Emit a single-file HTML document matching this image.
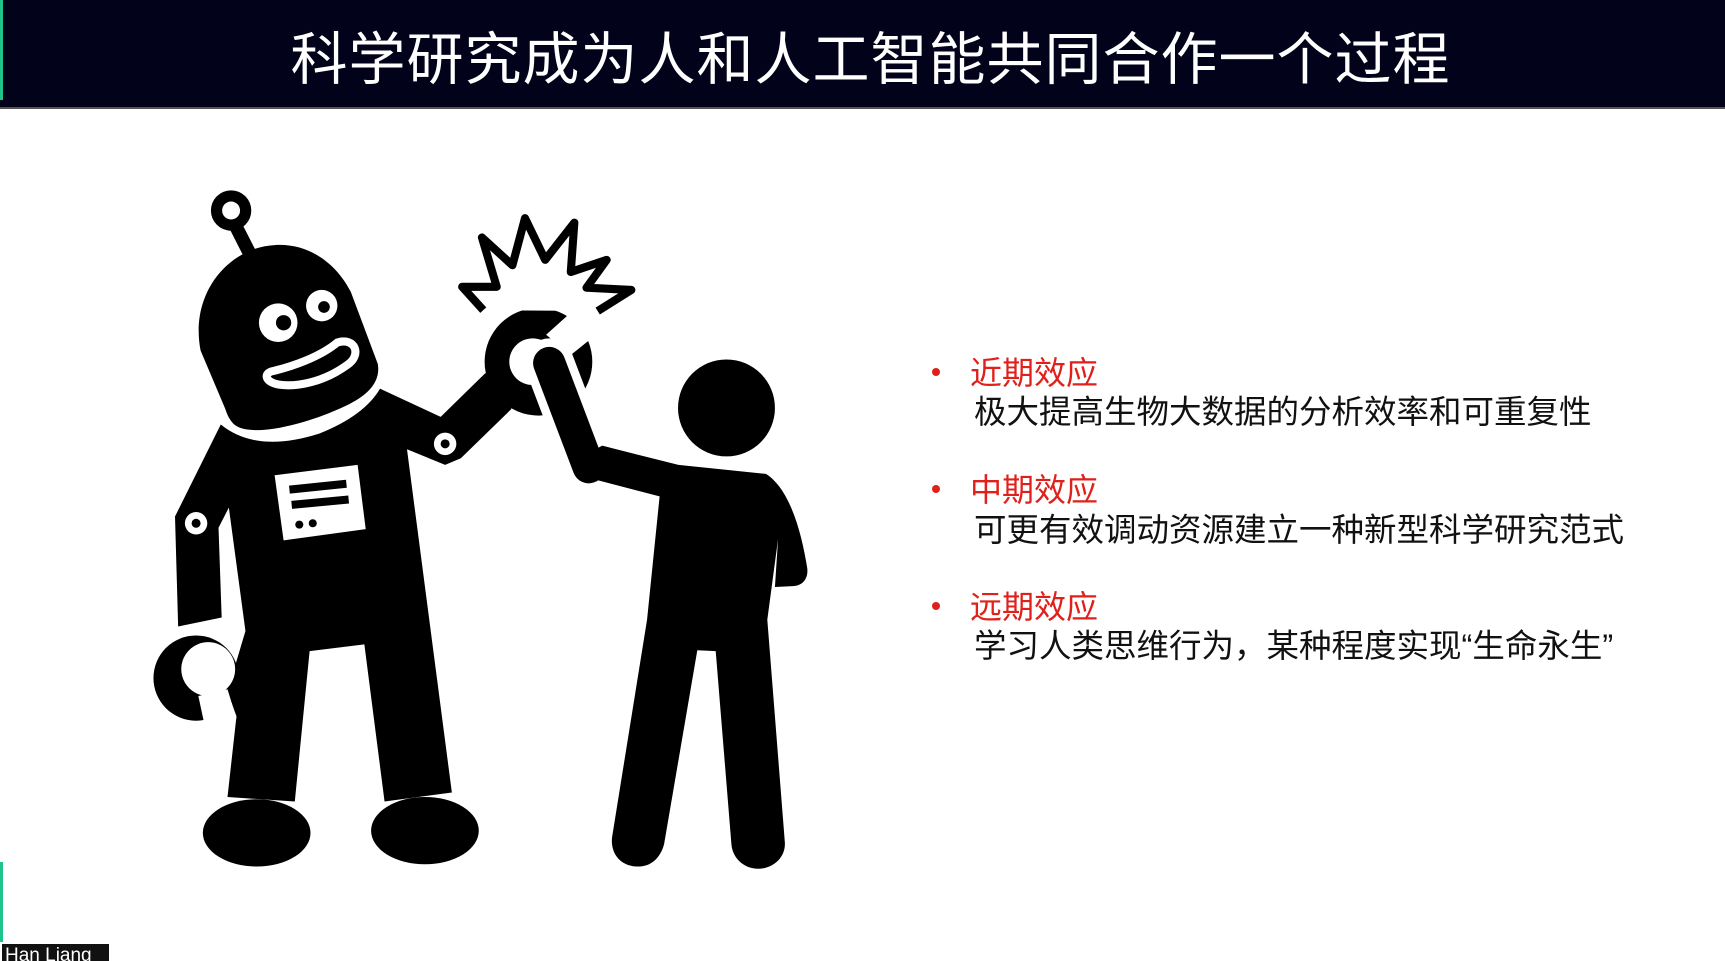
<!DOCTYPE html>
<html><head><meta charset="utf-8"><style>
html,body{margin:0;padding:0;width:1725px;height:961px;overflow:hidden;background:#fff;font-family:"Liberation Sans","Noto Sans CJK SC",sans-serif;}
#hdr{position:absolute;left:0;top:0;width:1725px;height:107px;background:#02021a;border-bottom:2px solid #555;}
#hdr .g{position:absolute;left:0;top:0;width:3px;height:100px;background:#1fc48a;}
#title{position:absolute;left:8px;width:1725px;top:28px;text-align:center;color:#fff;font-size:57px;line-height:64px;letter-spacing:1px;}
.b{position:absolute;color:#e0201a;font-size:32px;line-height:40px;}
.t{position:absolute;color:#111;font-size:32.5px;line-height:40px;}
.dot{position:absolute;width:8px;height:8px;border-radius:50%;background:#e0201a;}
#gl{position:absolute;left:0;top:862px;width:3px;height:80px;background:#1fc48a;}
#name{position:absolute;left:2px;top:944px;width:104px;height:17px;background:#111;color:#fff;font-size:19px;line-height:24px;padding-left:3px;overflow:hidden;}
</style></head><body>
<div id="hdr"><div class="g"></div><div id="title">科学研究成为人和人工智能共同合作一个过程</div></div>

<svg style="position:absolute;left:140px;top:180px" width="700" height="700" viewBox="0 0 1560 1560">
<g fill="#000">
<circle cx="203" cy="68" r="45"/><circle cx="203" cy="68" r="20" fill="#fff"/>
<line x1="212" y1="100" x2="245" y2="165" stroke="#000" stroke-width="30"/>
<path d="M135,380 C110,250 200,150 300,145 C380,140 440,190 470,250 L530,410 C540,470 470,500 420,520 C330,555 240,570 210,545 C200,535 195,525 190,510 Z"/>
<circle cx="308" cy="318" r="43" fill="#fff"/><circle cx="320" cy="318" r="17"/>
<circle cx="405" cy="280" r="35" fill="#fff"/><circle cx="410" cy="283" r="13"/>
<path d="M300,425 C340,415 400,395 440,362 C480,350 495,390 462,412 C410,450 350,462 310,456 C275,450 275,428 300,425 Z" stroke="#fff" stroke-width="18"/>
<path d="M180,545 Q260,610 400,565 Q500,525 535,465 L670,528 L700,620 L595,600 L695,1365 L545,1385 L500,1035 L378,1050 L345,1385 L195,1375 L215,1195 L195,1140 L235,1005 L198,730 L175,775 L182,975 L85,995 L78,750 Z"/>
<polygon points="670,528 770,430 828,510 715,620 680,635 595,600"/>
<circle cx="680" cy="588" r="25" fill="#fff"/><circle cx="680" cy="588" r="10"/>
<circle cx="125" cy="765" r="25" fill="#fff"/><circle cx="125" cy="765" r="10"/>
<circle cx="125" cy="1110" r="95"/><circle cx="152" cy="1090" r="60" fill="#fff"/>
<polygon points="130,1150 195,1135 215,1200 145,1220" fill="#fff"/>
<ellipse cx="260" cy="1455" rx="120" ry="75"/><ellipse cx="635" cy="1450" rx="120" ry="75"/>
<polygon points="300,658 485,635 503,778 320,803" fill="#fff"/>
<line x1="333" y1="690" x2="460" y2="677" stroke="#000" stroke-width="18"/>
<line x1="338" y1="724" x2="465" y2="712" stroke="#000" stroke-width="18"/>
<circle cx="355" cy="768" r="9"/><circle cx="385" cy="765" r="9"/>
<circle cx="888" cy="405" r="120"/><circle cx="875" cy="405" r="52" fill="#fff"/>
<polygon points="905,345 955,300 1010,350 960,390" fill="#fff"/>
<polyline points="765,290 718,238 795,238 762,128 830,190 858,85 903,178 968,95 960,205 1040,178 995,240 1095,245 1020,292" fill="#fff" stroke="#000" stroke-width="18" stroke-linejoin="round"/>
<circle cx="1307" cy="508" r="108"/>
<polyline points="912,408 1000,640" stroke="#fff" stroke-width="110" stroke-linecap="round" fill="none"/>
<polyline points="912,408 1000,640" stroke="#000" stroke-width="72" stroke-linecap="round" fill="none"/>
<path d="M1030,592 L1200,635 L1395,655 C1450,690 1475,790 1487,865 C1490,890 1475,905 1455,905 L1415,907 L1422,800 L1398,980 L1437,1475 C1440,1510 1410,1535 1378,1535 C1345,1535 1320,1510 1318,1480 L1283,1050 L1242,1048 L1168,1480 C1160,1510 1140,1530 1110,1530 C1070,1530 1048,1500 1052,1465 L1130,980 L1158,705 L985,660 C970,655 965,640 962,630 Z"/>
</g>
</svg>

<div class="dot" style="left:932px;top:368px"></div>
<div class="b" style="left:970px;top:353px">近期效应</div>
<div class="t" style="left:974px;top:392px">极大提高生物大数据的分析效率和可重复性</div>
<div class="dot" style="left:932px;top:485px"></div>
<div class="b" style="left:970px;top:470px">中期效应</div>
<div class="t" style="left:974px;top:510px">可更有效调动资源建立一种新型科学研究范式</div>
<div class="dot" style="left:932px;top:602px"></div>
<div class="b" style="left:970px;top:587px">远期效应</div>
<div class="t" style="left:974px;top:626px">学习人类思维行为，某种程度实现“生命永生”</div>

<div id="gl"></div>
<div id="name">Han Liang</div>
</body></html>
